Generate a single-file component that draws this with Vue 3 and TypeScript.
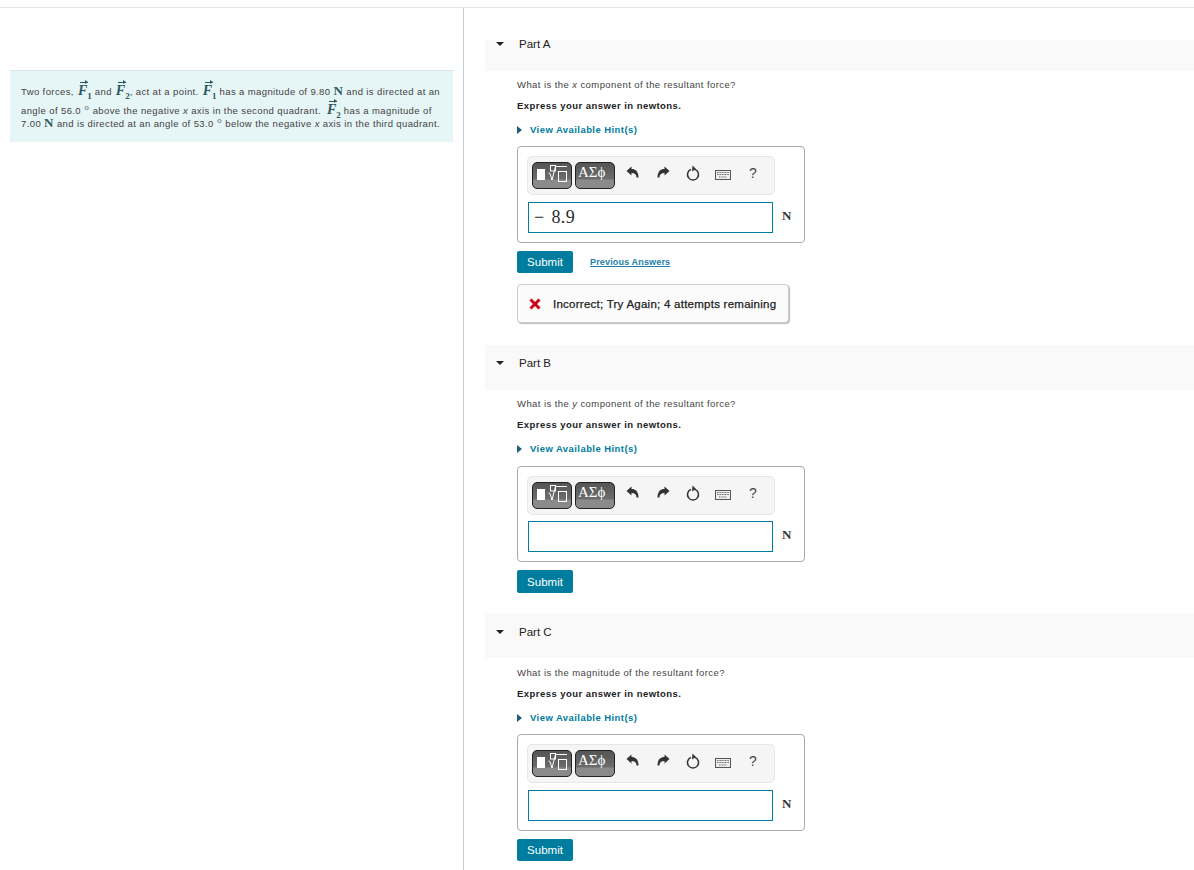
<script setup lang="ts">
interface Part {
  name: string;
  first?: boolean;
  question: string;
  axis?: string;
  tail: string;
  answer?: string;
  attempted?: boolean;
}

// 三个小题，只有 Part A 答过一次
const parts: Part[] = [
  { name: "Part A", first: true, question: "What is the ", axis: "x", tail: " component of the resultant force?", answer: "− 8.9", attempted: true },
  { name: "Part B", question: "What is the ", axis: "y", tail: " component of the resultant force?" },
  { name: "Part C", question: "What is the magnitude of the resultant force?", tail: "" },
];
</script>

<template>
  <div class="page">
    <aside class="left">
      <div class="statement">
        <div class="statement__line">
          Two forces,
          <span class="vec"><i>F</i><sub>1</sub></span>
          and
          <span class="vec"><i>F</i><sub>2</sub></span>, act at a point.
          <span class="vec"><i>F</i><sub>1</sub></span>
          has a magnitude of 9.80 <b class="unit">N</b> and is directed at an
        </div>
        <div class="statement__line statement__line--gap">
          angle of 56.0 <span class="deg">°</span> above the negative <em>x</em> axis in the second quadrant.
          <span class="vec"><i>F</i><sub>2</sub></span>
          has a magnitude of
        </div>
        <div class="statement__line">
          7.00 <b class="unit">N</b> and is directed at an angle of 53.0 <span class="deg">°</span> below the negative <em>x</em> axis in the third quadrant.
        </div>
      </div>
    </aside>

    <main class="right">
      <section v-for="part in parts" :key="part.name" :class="['part', { 'part--first': part.first }]">
        <header class="part__head">
          <span class="part__caret"></span>
          <span class="part__name">{{ part.name }}</span>
        </header>

        <div class="part__body">
          <p class="question">{{ part.question }}<em v-if="part.axis">{{ part.axis }}</em>{{ part.tail }}</p>
          <p class="express">Express your answer in newtons.</p>
          <a class="hint"><span class="hint__caret"></span>View Available Hint(s)</a>

          <div class="answer">
            <div class="toolbar">
              <span class="tmpl">
                <span class="tmpl__solid"></span>
                <svg width="22" height="20" viewBox="0 0 22 20" fill="none" stroke="#fff" stroke-width="1">
                  <rect x="3.5" y="1.500" width="5" height="5.500" />
                  <path d="M1.500 9l1.500.5 2 6.500 3.500-13.500h11.500" />
                  <rect x="11.5" y="7.500" width="8" height="10" />
                </svg>
              </span>
              <span class="tmpl tmpl--greek">ΑΣϕ</span>
              <svg class="tool tool--undo" width="14" height="14" viewBox="0 0 14 14" fill="#333">
                <path d="M.5 5l5-4.500V3c4 0 7 2.500 7 8.500h-2c0-3-1.500-4.500-5-4.500v2.500z" />
              </svg>
              <svg class="tool tool--redo" width="14" height="14" viewBox="0 0 14 14" fill="#333">
                <path d="M13.500 5l-5-4.500V3c-4 0-7 2.500-7 8.500h2c0-3 1.500-4.500 5-4.500v2.500z" />
              </svg>
              <svg class="tool tool--reset" width="14" height="16" viewBox="0 0 14 16" fill="none" stroke="#333" stroke-width="1.500">
                <path d="M5 4.400a5.500 5.500 0 1 0 4 0" />
                <path d="M6.500.5L10 4 6 6.500z" fill="#333" stroke="none" />
              </svg>
              <svg class="tool tool--keys" width="16" height="10" viewBox="0 0 16 10">
                <rect x="0.500" y="0.500" width="15" height="9" fill="#eee" stroke="#555" />
                <path d="M2 2.500h12M2 4.500h12M4 7h8" stroke="#666" stroke-width="1.200" stroke-dasharray="1 .6" />
              </svg>
              <span class="tool tool--help">?</span>
            </div>
            <div class="answer__row">
              <div class="input">{{ part.answer }}</div>
              <span class="answer__unit">N</span>
            </div>
          </div>

          <div class="actions">
            <button type="button" class="submit">Submit</button>
            <a v-if="part.attempted" class="previous">Previous Answers</a>
          </div>

          <div v-if="part.attempted" class="feedback">
            <svg width="12" height="12" viewBox="0 0 12 12" fill="none" stroke="#d0021b" stroke-width="3">
              <path d="M1.500 1.500l9 9M10.500 1.500l-9 9" />
            </svg>
            <span>Incorrect; Try Again; 4 attempts remaining</span>
          </div>
        </div>
      </section>
    </main>
  </div>
</template>

<style>
html,
body {
  height: 870px;
  overflow: hidden;
  background: #fff;
}
</style>

<style scoped>
.page {
  display: grid;
  grid-template-columns: 464px 1fr;
  height: 862px;
  margin-top: 7px;
  border-top: 1px solid #e5e5e5;
  color: #333;
  font-family: "Liberation Sans", Arial, sans-serif;
  font-size: 11px;
}

.left {
  padding: 62px 10px 0;
  border-right: 1px solid #c4cdd5;
}

.statement {
  width: 443px;
  height: 72px;
  box-sizing: border-box;
  padding: 13px 11px 0;
  color: #444;
  font-size: 9.5px;
  line-height: 14px;
  letter-spacing: 0.39px;
  background: #e6f5f6;
  border-top: 1px solid #d8e6ea;
}

.statement__line {
  height: 14px;
  white-space: nowrap;
}

.statement__line--gap {
  margin-top: 5px;
}

.statement__line--gap .vec {
  margin-left: 3px;
}

.vec {
  position: relative;
  display: inline-block;
  margin-left: 1px;
  color: #2d5a5e;
  font-family: "Liberation Serif", serif;
  font-size: 14px;
  font-weight: 700;
  line-height: 14px;
  letter-spacing: 0;
}

.vec::before {
  content: "";
  position: absolute;
  top: -2px;
  left: 2px;
  width: 8px;
  height: 1px;
  background: #2d5a5e;
}

.vec::after {
  content: "";
  position: absolute;
  top: -4px;
  left: 7px;
  border-left: 3px solid #2d5a5e;
  border-top: 2.500px solid transparent;
  border-bottom: 2.500px solid transparent;
}

.vec sub {
  font-size: 9px;
  line-height: 0;
}

.unit {
  color: #2d5a5e;
  font-family: "Liberation Serif", serif;
  font-size: 13px;
  line-height: 10px;
}

.deg {
  color: #666;
  font-family: "Liberation Serif", serif;
  font-size: 13px;
  line-height: 0;
}

.right {
  padding: 32px 0 0 21px;
}

.part {
  margin-bottom: 20px;
}

.part--first {
  margin-bottom: 0;
}

.part__head {
  display: flex;
  align-items: flex-start;
  height: 45px;
  margin-bottom: 7px;
  padding: 12px 0 0 11px;
  box-sizing: border-box;
  background: #f9f9f9;
  color: #222;
}

.part--first .part__head {
  height: 31px;
  padding-top: 0;
}

.part--first .part__name {
  margin-top: -2px;
}

/* Part C 的标题和题干比 Part B 低 1px，答题框位置不变 */
.part:nth-child(3) .part__head {
  margin-bottom: 8px;
  padding-top: 13px;
}

.part:nth-child(3) .answer {
  margin-top: 9px;
}

.part__caret {
  width: 0;
  height: 0;
  margin-top: 4px;
  margin-right: 15px;
  border-top: 4.500px solid #222;
  border-left: 4.500px solid transparent;
  border-right: 4.500px solid transparent;
}

.part--first .part__caret {
  margin-top: 2px;
}

.part__name {
  font-size: 11.5px;
  line-height: 13px;
}

.part__body {
  padding-left: 32px;
}

.question {
  margin: 0;
  color: #444;
  font-size: 9.5px;
  line-height: 14px;
  letter-spacing: 0.42px;
}

.express {
  margin: 7px 0 0;
  color: #222;
  font-size: 9.5px;
  font-weight: 700;
  line-height: 14px;
  letter-spacing: 0.45px;
}

.hint {
  display: flex;
  align-items: center;
  margin-top: 10px;
  color: #007c9e;
  font-size: 9.5px;
  font-weight: 700;
  line-height: 14px;
  letter-spacing: 0.43px;
}

.hint__caret {
  width: 0;
  height: 0;
  margin-right: 8px;
  border-left: 5px solid #1d5f7a;
  border-top: 4px solid transparent;
  border-bottom: 4px solid transparent;
}

.answer {
  box-sizing: border-box;
  width: 288px;
  height: 97px;
  margin-top: 10px;
  padding: 9px 9px;
  background: #fff;
  border: 1px solid #aaa;
  border-radius: 4px;
}

.part--first .answer {
  margin-top: 9px;
}

/* Part B 的框矮 1px，输入框上移，Submit 高 1px */
.part:nth-child(2) .answer {
  height: 96px;
}

.part:nth-child(2) .answer__row {
  margin-top: 6px;
}

.part:nth-child(2) .submit {
  height: 23px;
}

.toolbar {
  display: flex;
  align-items: center;
  box-sizing: border-box;
  width: 248px;
  height: 39px;
  padding-left: 4px;
  background: #f5f5f5;
  border: 1px solid #e6e6e6;
  border-radius: 5px;
}

.tmpl {
  display: flex;
  align-items: flex-start;
  flex: none;
  box-sizing: border-box;
  width: 40px;
  height: 27px;
  margin-right: 3px;
  padding: 1px 0 0 3px;
  color: #fff;
  background: linear-gradient(#555 0, #6c6c6c 16px, #8a8a8a 17px, #8a8a8a 100%);
  border: 1px solid #222;
  border-radius: 5px;
}

.tmpl--greek {
  margin-right: 0;
  padding: 0 0 0 2px;
  font-family: "Liberation Serif", "DejaVu Serif", serif;
  font-size: 15px;
  line-height: 19px;
}

.tmpl__solid {
  width: 8px;
  height: 11px;
  margin: 5px 2px 0 1px;
  background: #fff;
}

.tool {
  flex: none;
  margin-top: -5px;
}

.tool--undo {
  margin-left: 11px;
}

.tool--redo {
  margin-left: 16px;
}

.tool--reset {
  margin-left: 16px;
}

.tool--keys {
  margin-left: 15px;
  margin-top: -2px;
}

.tool--help {
  margin-left: 18px;
  color: #444;
  font-size: 14px;
}

.answer__row {
  display: flex;
  align-items: center;
  margin-top: 7px;
  padding-left: 1px;
}

.input {
  box-sizing: border-box;
  width: 245px;
  height: 31px;
  padding-left: 5px;
  color: #2b2b2b;
  font-family: "Liberation Serif", serif;
  font-size: 18px;
  line-height: 29px;
  letter-spacing: 0.4px;
  word-spacing: 2px;
  border: 1px solid #007c9e;
}

.answer__unit {
  margin-top: -3px;
  margin-left: 9px;
  color: #333;
  font-family: "Liberation Serif", serif;
  font-size: 13px;
  font-weight: 700;
}

.actions {
  display: flex;
  align-items: center;
  margin-top: 8px;
}

.submit {
  width: 56px;
  height: 22px;
  padding: 0;
  color: #fff;
  font-family: inherit;
  font-size: 11.5px;
  background: #007c9e;
  border: 0;
  border-radius: 2px;
}

.previous {
  margin-top: -1px;
  margin-left: 17px;
  color: #1d7fa8;
  font-size: 9px;
  font-weight: 700;
  letter-spacing: 0.16px;
  text-decoration: underline;
}

.feedback {
  display: flex;
  align-items: center;
  gap: 12px;
  box-sizing: border-box;
  width: 272px;
  height: 39px;
  margin-top: 11px;
  margin-bottom: 22px;
  padding-left: 11px;
  color: #222;
  font-size: 11.5px;
  letter-spacing: 0.25px;
  -webkit-text-stroke: 0.25px #222;
  background: #fbfbfb;
  border: 1px solid #ccc;
  border-radius: 4px;
  box-shadow: 1px 1px 1px #bbb;
}
</style>
